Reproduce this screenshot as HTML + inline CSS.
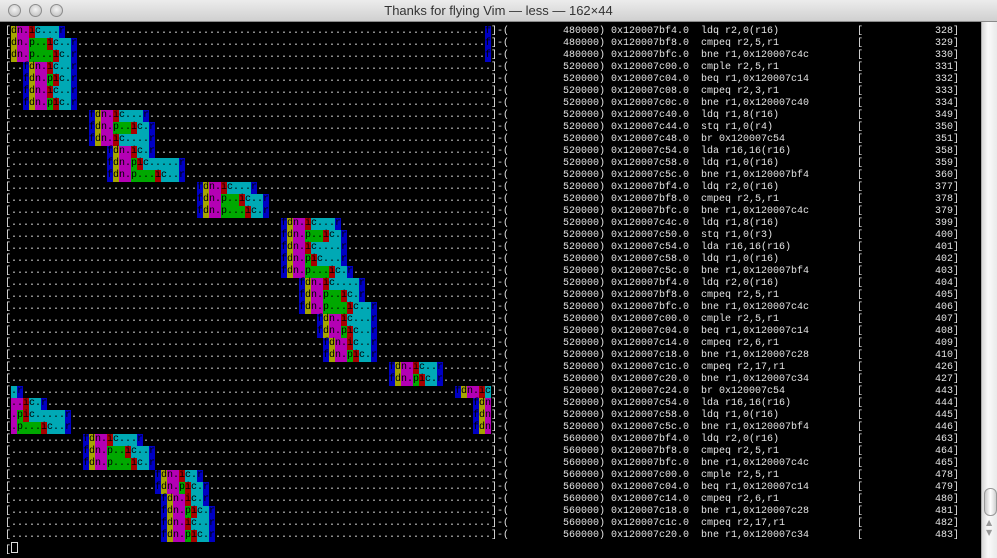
<!DOCTYPE html>
<html><head><meta charset="utf-8">
<style>
html,body{margin:0;padding:0;}
body{width:997px;height:558px;overflow:hidden;background:#000;position:relative;font-family:"Liberation Mono",monospace;}
#tb{position:absolute;left:0;top:0;width:997px;height:22px;background:linear-gradient(#ececec,#d0d0d0);border-bottom:1px solid #8a8a8a;box-sizing:border-box;}
#tb .t{position:absolute;left:0;width:997px;top:3px;text-align:center;font:13px "Liberation Sans",sans-serif;color:#333;}
.btn{position:absolute;top:4px;width:13px;height:13px;border-radius:50%;background:radial-gradient(circle at 50% 40%,#f4f4f4,#b8b8b8);border:1px solid #8c8c8c;box-sizing:border-box;}
pre{margin:0;position:absolute;font-family:"Liberation Mono",monospace;font-size:10px;line-height:12px;color:#e4e4e4;white-space:pre;}
#pipe{left:5px;top:26px;}
#pipe div{height:12px;}
#pipe span{display:inline-block;width:6px;height:12px;text-align:center;}
#sb{position:absolute;left:981px;top:22px;width:16px;height:536px;background:linear-gradient(90deg,#d8d8d8,#fafafa 40%,#eaeaea);border-left:1px solid #aaa;box-sizing:border-box;}
#thumb{position:absolute;left:2px;top:466px;width:11px;height:26px;border-radius:6px;background:linear-gradient(90deg,#c8c8c8,#fff 50%,#cfcfcf);border:1px solid #999;}
</style></head><body>
<div id="tb">
<div class="btn" style="left:8px"></div><div class="btn" style="left:29px"></div><div class="btn" style="left:50px"></div>
<div class="t">Thanks for flying Vim — less — 162×44</div>
</div>
<pre id="pipe"></pre>
<pre style="left:491px;top:26px">]-(         480000) 0x120007bf4.0
]-(         480000) 0x120007bf8.0
]-(         480000) 0x120007bfc.0
]-(         520000) 0x120007c00.0
]-(         520000) 0x120007c04.0
]-(         520000) 0x120007c08.0
]-(         520000) 0x120007c0c.0
]-(         520000) 0x120007c40.0
]-(         520000) 0x120007c44.0
]-(         520000) 0x120007c48.0
]-(         520000) 0x120007c54.0
]-(         520000) 0x120007c58.0
]-(         520000) 0x120007c5c.0
]-(         520000) 0x120007bf4.0
]-(         520000) 0x120007bf8.0
]-(         520000) 0x120007bfc.0
]-(         520000) 0x120007c4c.0
]-(         520000) 0x120007c50.0
]-(         520000) 0x120007c54.0
]-(         520000) 0x120007c58.0
]-(         520000) 0x120007c5c.0
]-(         520000) 0x120007bf4.0
]-(         520000) 0x120007bf8.0
]-(         520000) 0x120007bfc.0
]-(         520000) 0x120007c00.0
]-(         520000) 0x120007c04.0
]-(         520000) 0x120007c14.0
]-(         520000) 0x120007c18.0
]-(         520000) 0x120007c1c.0
]-(         520000) 0x120007c20.0
]-(         520000) 0x120007c24.0
]-(         520000) 0x120007c54.0
]-(         520000) 0x120007c58.0
]-(         520000) 0x120007c5c.0
]-(         560000) 0x120007bf4.0
]-(         560000) 0x120007bf8.0
]-(         560000) 0x120007bfc.0
]-(         560000) 0x120007c00.0
]-(         560000) 0x120007c04.0
]-(         560000) 0x120007c14.0
]-(         560000) 0x120007c18.0
]-(         560000) 0x120007c1c.0
]-(         560000) 0x120007c20.0</pre>
<pre style="left:701px;top:26px">ldq r2,0(r16)
cmpeq r2,5,r1
bne r1,0x120007c4c
cmple r2,5,r1
beq r1,0x120007c14
cmpeq r2,3,r1
bne r1,0x120007c40
ldq r1,8(r16)
stq r1,0(r4)
br 0x120007c54
lda r16,16(r16)
ldq r1,0(r16)
bne r1,0x120007bf4
ldq r2,0(r16)
cmpeq r2,5,r1
bne r1,0x120007c4c
ldq r1,8(r16)
stq r1,0(r3)
lda r16,16(r16)
ldq r1,0(r16)
bne r1,0x120007bf4
ldq r2,0(r16)
cmpeq r2,5,r1
bne r1,0x120007c4c
cmple r2,5,r1
beq r1,0x120007c14
cmpeq r2,6,r1
bne r1,0x120007c28
cmpeq r2,17,r1
bne r1,0x120007c34
br 0x120007c54
lda r16,16(r16)
ldq r1,0(r16)
bne r1,0x120007bf4
ldq r2,0(r16)
cmpeq r2,5,r1
bne r1,0x120007c4c
cmple r2,5,r1
beq r1,0x120007c14
cmpeq r2,6,r1
bne r1,0x120007c28
cmpeq r2,17,r1
bne r1,0x120007c34</pre>
<pre style="left:857px;top:26px">[            328]
[            329]
[            330]
[            331]
[            332]
[            333]
[            334]
[            349]
[            350]
[            351]
[            358]
[            359]
[            360]
[            377]
[            378]
[            379]
[            399]
[            400]
[            401]
[            402]
[            403]
[            404]
[            405]
[            406]
[            407]
[            408]
[            409]
[            410]
[            426]
[            427]
[            443]
[            444]
[            445]
[            446]
[            463]
[            464]
[            465]
[            478]
[            479]
[            480]
[            481]
[            482]
[            483]</pre>
<pre style="left:5px;top:542px">[<span style="display:inline-block;width:5px;height:9px;border:1px solid #ddd;vertical-align:-1px"></span></pre>
<div id="sb"><div id="thumb"></div>
<div style="position:absolute;left:4px;top:496px;font:8px 'DejaVu Sans',sans-serif;color:#999">▲</div>
<div style="position:absolute;left:4px;top:506px;font:8px 'DejaVu Sans',sans-serif;color:#999">▼</div>
</div>
<script>
var P=[[80,"fdn.ic...r"],[80,"fdn.p..ic..r"],[80,"fdn.p...ic.r"],[3,"fdn.ic..r"],[3,"fdn.pic.r"],[3,"fdn.ic..r"],[3,"fdn.pic.r"],[14,"fdn.ic...r"],[14,"fdn.p..ic.r"],[14,"fdn.ic....r"],[17,"fdn.ic.r"],[17,"fdn.pic.....r"],[17,"fdn.p...ic..r"],[32,"fdn.ic...r"],[32,"fdn.p..ic..r"],[32,"fdn.p...ic.r"],[46,"fdn.ic...r"],[46,"fdn.p..ic.r"],[46,"fdn.ic....r"],[46,"fdn.pic...r"],[46,"fdn.p...ic.r"],[49,"fdn.ic....r"],[49,"fdn.p..ic.r"],[49,"fdn.p...ic..r"],[52,"fdn.ic...r"],[52,"fdn.pic..r"],[53,"fdn.ic..r"],[53,"fdn.pic.r"],[64,"fdn.ic..r"],[64,"fdn.pic.r"],[75,"fdn.ic.r"],[78,"fdn..ic.r"],[78,"fdn.pic.....r"],[78,"fdn.p...ic..r"],[13,"fdn.ic...r"],[13,"fdn.p..ic..r"],[13,"fdn.p...ic.r"],[25,"fdn.ic.r"],[25,"fdn.pic.r"],[26,"fdn.ic.r"],[26,"fdn.pic.r"],[26,"fdn.ic..r"],[26,"fdn.pic.r"]];
var C={f:"#0000c4",d:"#a5a500",n:"#b400b4",p:"#00a800",i:"#a80000",c:"#00a9b5",r:"#0000c4"};
var h="";
for(var k=0;k<P.length;k++){
 var ch=[],bg=[];for(var j=0;j<=80;j++){ch[j]=".";bg[j]=null;}
 var s=P[k][1],col=P[k][0],cur=null;
 for(var j=0;j<s.length;j++){var c=s[j];if(c!=".")cur=C[c];var cc=col+j;if(cc>80)cc-=80;ch[cc]=c;bg[cc]=cur;}
 h+="<div><span>[</span>";
 for(var j=1;j<=80;j++){h+=bg[j]?'<span style="background:'+bg[j]+';color:#000">'+ch[j]+'</span>':'<span>'+ch[j]+'</span>';}
 h+="</div>";
}
document.getElementById("pipe").innerHTML=h;
</script>
</body></html>
